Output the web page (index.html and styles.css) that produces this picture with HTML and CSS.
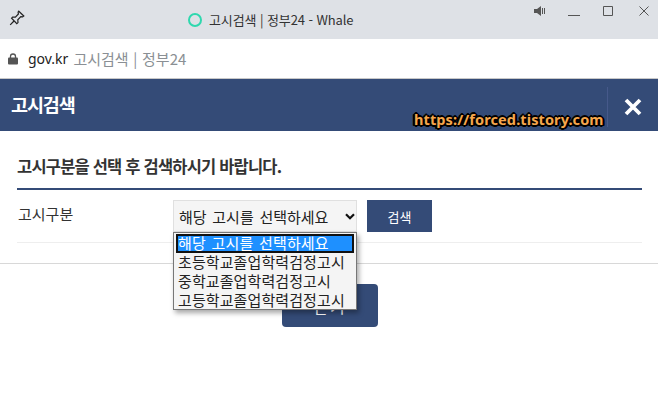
FILE: index.html
```html
<!DOCTYPE html>
<html lang="ko">
<head>
<meta charset="utf-8">
<title>고시검색 | 정부24</title>
<link rel="stylesheet" href="styles.css">
</head>
<body>
<div class="titlebar">
  <svg class="pin" width="16" height="16" viewBox="0 0 16 16" fill="none" stroke="#222" stroke-width="1.2"><path d="M9.8 1.2 14.8 6 13.6 6.9 11.8 6.6 8.8 9.8 9 12.6 7.8 13.6 2.6 8.2 3.6 7.1 6.4 7.2 9.4 4 9.1 2.2Z"/><path d="M5 11 1.2 14.8"/></svg>
  <div class="title">
    <span class="ring"></span>
    <span>고시검색 | 정부24 - Whale</span>
  </div>
  <div class="winctl">
    <svg class="ctl" width="12" height="10" viewBox="0 0 12 10"><path d="M0 3h3l4-3v10L3 7H0Z" fill="#555"/><path d="M8.500 2v6M10.500 2v6" stroke="#555"/></svg>
    <svg class="ctl" width="12" height="10" viewBox="0 0 12 10"><path d="M0 9.500h12" stroke="#555"/></svg>
    <svg class="ctl" width="10" height="10" viewBox="0 0 10 10"><path d="M.5.5h9v9h-9Z" fill="none" stroke="#555"/></svg>
    <svg class="ctl" width="10" height="10" viewBox="0 0 10 10"><path d="M.5.500l9 9M9.500.500l-9 9" stroke="#555"/></svg>
  </div>
</div>
<div class="addressbar">
  <svg width="10" height="12" viewBox="0 0 10 12"><path d="M2.500 5V3.500a2.500 2.500 0 0 1 5 0V5" fill="none" stroke="#555" stroke-width="1.300"/><rect y="4.500" width="10" height="7" rx="1" fill="#555"/></svg>
  <span class="domain">gov.kr</span>
  <span class="pagename">고시검색 | 정부24</span>
</div>
<header class="head">
  <h1>고시검색</h1>
  <div class="closebox">
    <svg width="20" height="20" viewBox="0 0 20 20"><path d="M3 3 17 17M17 3 3 17" stroke="#fff" stroke-width="3.800"/></svg>
  </div>
  <span class="watermark">https://forced.tistory.com</span>
</header>
<main class="content">
  <h2>고시구분을 선택 후 검색하시기 바랍니다.</h2>
  <div class="row">
    <span class="label">고시구분</span>
    <div class="selectbox">
      <span>해당 고시를 선택하세요</span>
      <svg width="10" height="7" viewBox="0 0 10 7"><path d="M1 1.200 5 5.200 9 1.200" fill="none" stroke="#111" stroke-width="2.200"/></svg>
    </div>
    <button class="search">검색</button>
    <ul class="options">
      <li class="active">해당 고시를 선택하세요</li>
      <li>초등학교졸업학력검정고시</li>
      <li>중학교졸업학력검정고시</li>
      <li>고등학교졸업학력검정고시</li>
    </ul>
  </div>
</main>
<div class="footer">
  <button class="closebtn">닫기</button>
</div>
</body>
</html>
```

FILE: styles.css
```css
* { box-sizing: border-box; }
html, body { margin: 0; padding: 0; }
body {
  width: 658px;
  height: 404px;
  overflow: hidden;
  background: #fff;
  font-family: "Noto Sans CJK KR", "Noto Sans", sans-serif;
  color: #333;
}
.titlebar {
  height: 39px;
  background: #dee1e6;
  display: flex;
  position: relative;
  align-items: center;
  padding-left: 188px;
}
.pin { position: absolute; left: 9px; top: 10px; }
.title {
  display: flex;
  align-items: center;
  gap: 7px;
  font-size: 13px;
  letter-spacing: -.1px;
  color: #333;
}
.ring {
  width: 14px;
  height: 14px;
  border: 2px solid #2fd8ae;
  border-radius: 50%;
}
.winctl {
  position: absolute;
  right: 0;
  top: 0;
}
.ctl { position: absolute; top: 6px; }
.ctl:nth-child(1) { right: 112px; }
.ctl:nth-child(2) { right: 78px; }
.ctl:nth-child(3) { right: 45px; }
.ctl:nth-child(4) { right: 9px; }
.addressbar {
  height: 40px;
  background: #fff;
  border-bottom: 1px solid #c8c8c8;
  display: flex;
  align-items: center;
  padding-left: 8px;
}
.domain { margin-left: 10px; font-size: 14px; color: #222; font-family: "Noto Sans", sans-serif; }
.pagename { margin-left: 5px; font-size: 15px; word-spacing: .5px; color: #8a8f94; }
.head {
  position: relative;
  height: 52px;
  background: #344b77;
  display: flex;
  align-items: flex-start;
  justify-content: space-between;
  padding-left: 11px;
}
.head h1 {
  margin: 11px 0 0;
  font-size: 18.500px;
  line-height: 28px;
  font-weight: 700;
  letter-spacing: -1.100px;
  color: #fff;
}
.closebox {
  width: 51px;
  height: 40px;
  border-left: 1px solid #46598a;
  margin-top: 8px;
  display: flex;
  align-items: center;
  justify-content: center;
}
.watermark {
  position: absolute;
  left: 414px;
  top: 30px;
  font-family: "Noto Sans", sans-serif;
  font-size: 14.500px;
  font-weight: 700;
  color: #f6a74c;
  line-height: 20px;
  letter-spacing: .1px;
  text-shadow: -1px -1px 0 #000, 1px -1px 0 #000, -1px 1px 0 #000, 1px 1px 0 #000, 0 -2px 0 #000, 0 2px 0 #000, -2px 0 0 #000, 2px 0 0 #000, 2px 1px 0 #000, -2px 1px 0 #000;
}
.content { padding: 23px 16px 0 17px; }
.content h2 {
  margin: 0;
  height: 36px;
  font-size: 16.500px;
  line-height: 24px;
  font-weight: 700;
  letter-spacing: -0.800px;
  color: #333;
  border-bottom: 2px solid #344b77;
}
.row {
  position: relative;
  height: 53px;
  padding-top: 10px;
  border-bottom: 1px solid #eee;
  display: flex;
  align-items: flex-start;
}
.label {
  width: 156px;
  padding-left: 1px;
  font-size: 15px;
  line-height: 32px;
  margin-top: -2px;
  color: #333;
}
.selectbox {
  width: 184px;
  height: 32px;
  border: 1px solid #e0e0e0;
  background: #f5f5f5;
  display: flex;
  align-items: center;
  justify-content: space-between;
  padding: 0 0 0 5px;
  font-size: 15px;
  word-spacing: 1.500px;
  color: #222;
}
.selectbox svg { margin-right: 1px; }
.search {
  margin-left: 10px;
  width: 65px;
  height: 32px;
  border: 0;
  background: #344b77;
  color: #fff;
  font: 13px "Noto Sans CJK KR", sans-serif;
}
.options {
  position: absolute;
  left: 156px;
  top: 42px;
  width: 184px;
  height: 78px;
  margin: 0;
  padding: 1px 2px 2px;
  list-style: none;
  background: #f4f4f4;
  border: 1px solid #777;
  box-shadow: 2px 3px 5px rgba(0,0,0,.35);
  font-size: 15px;
  letter-spacing: .1px;
  color: #222;
  z-index: 2;
}
.options li { height: 19px; line-height: 17px; padding-left: 2px; white-space: nowrap; }
.options .active { background: #1e90ff; color: #fff; outline: 2px solid #111; outline-offset: -2px; word-spacing: 1.500px; line-height: 17px; }
.footer {
  margin-top: 20px;
  border-top: 1px solid #d8d8d8;
  display: flex;
  justify-content: center;
  padding: 20px 0 0 2px;
}
.closebtn {
  width: 96px;
  height: 43px;
  border: 0;
  border-radius: 4px;
  background: #344b77;
  color: #fff;
  letter-spacing: 2px;
  font: 16px "Noto Sans CJK KR", sans-serif;
}
```
